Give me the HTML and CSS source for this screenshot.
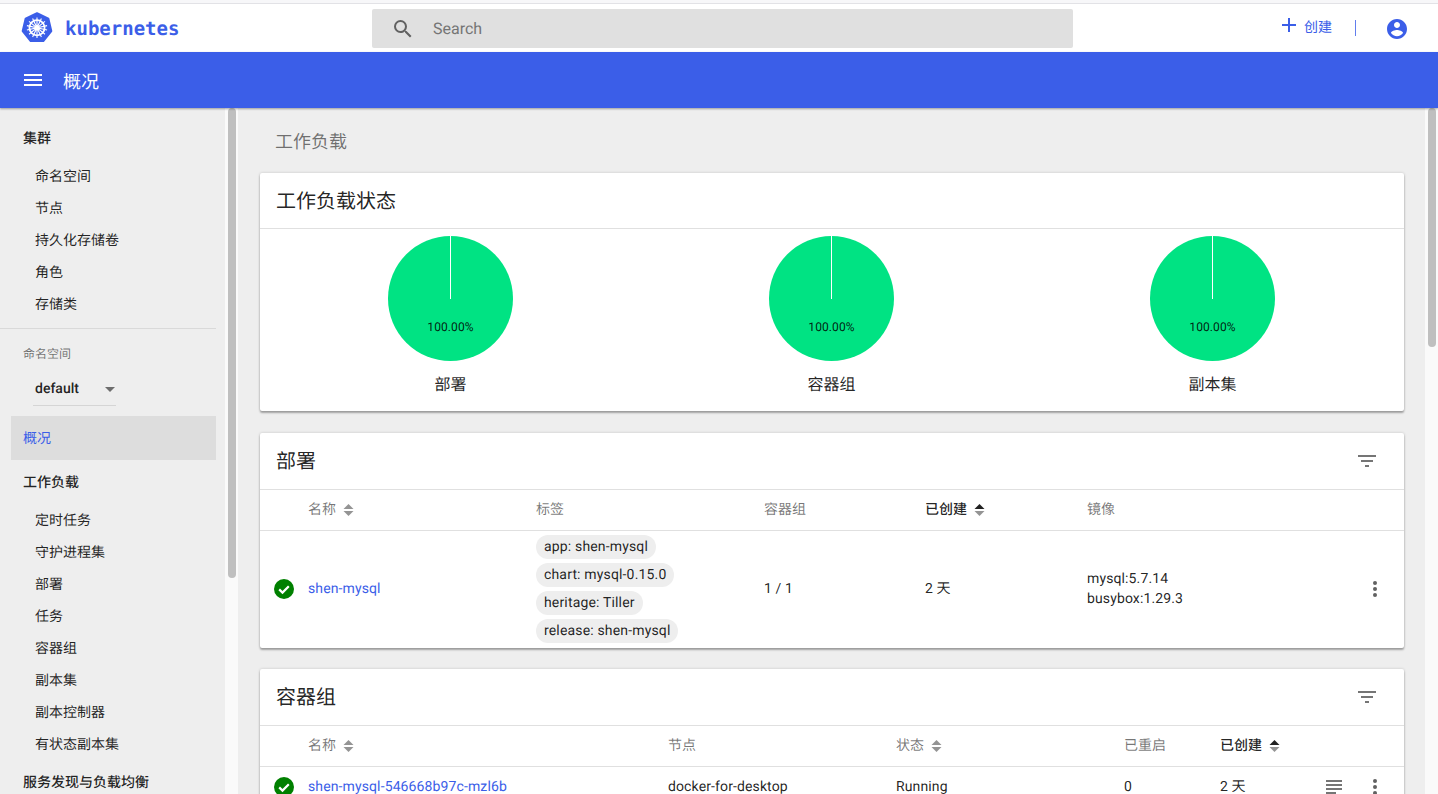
FILE: index.html
```html
<!DOCTYPE html>
<html lang="zh">
<head>
<meta charset="utf-8">
<title>概况 - Kubernetes Dashboard</title>
<link rel="stylesheet" href="styles.css">
</head>
<body>
<div class="app">
  <div class="strip"></div>
  <header class="topbar">
    <div class="brand">
      <svg class="logo" viewBox="0 0 32 32" width="32" height="32">
        <path class="logo-hept" d="M16 1.2 L27.4 6.7 L30.3 19.1 L22.3 29 L9.7 29 L1.7 19.1 L4.6 6.7 Z"/>
        <g class="logo-wheel">
          <circle cx="16" cy="15.8" r="7.6"/>
          <path d="M16 5.6V26M8 9.4 24 22.2M24 9.4 8 22.2M5.9 18 26.1 13.6M26.1 18 5.9 13.6M11.6 25 20.4 6.6M20.4 25 11.6 6.6"/>
        </g>
        <circle class="logo-hub" cx="16" cy="15.8" r="2.3"/>
      </svg>
      <span class="brand-name">kubernetes</span>
    </div>
    <div class="search">
      <svg class="search-icon" viewBox="0 0 24 24" width="24" height="24"><path d="M15.5 14h-.79l-.28-.27A6.47 6.47 0 0 0 16 9.5 6.5 6.5 0 1 0 9.5 16c1.61 0 3.09-.59 4.23-1.57l.27.28v.79l5 4.99L20.49 19l-4.99-5zm-6 0C7.01 14 5 11.99 5 9.5S7.01 5 9.5 5 14 7.01 14 9.5 11.99 14 9.5 14z"/></svg>
      <span class="search-text">Search</span>
    </div>
    <div class="actions">
      <svg class="plus" viewBox="0 0 14 14" width="14" height="14"><path d="M6 0h2v6h6v2H8v6H6V8H0V6h6z"/></svg>
      <span class="create">创建</span>
      <span class="divider"></span>
      <svg class="avatar" viewBox="0 0 24 24" width="24" height="24"><path d="M12 2C6.48 2 2 6.48 2 12s4.48 10 10 10 10-4.48 10-10S17.52 2 12 2zm0 3c1.66 0 3 1.34 3 3s-1.34 3-3 3-3-1.34-3-3 1.34-3 3-3zm0 14.2c-2.5 0-4.71-1.28-6-3.22.03-1.99 4-3.08 6-3.08 1.99 0 5.97 1.09 6 3.08-1.29 1.94-3.5 3.22-6 3.22z"/></svg>
    </div>
  </header>
  <div class="titlebar">
    <svg class="menu" viewBox="0 0 18 12" width="18" height="12"><path d="M0 0h18v2H0zM0 5h18v2H0zM0 10h18v2H0z"/></svg>
    <span class="page-title">概况</span>
  </div>
  <div class="body">
    <nav class="sidebar">
      <div class="nav-head">集群</div>
      <div class="nav-item">命名空间</div>
      <div class="nav-item">节点</div>
      <div class="nav-item">持久化存储卷</div>
      <div class="nav-item">角色</div>
      <div class="nav-item">存储类</div>
      <div class="nav-rule"></div>
      <div class="ns-label">命名空间</div>
      <div class="ns-select"><span>default</span><i class="ns-arrow"></i></div>
      <div class="nav-head nav-active">概况</div>
      <div class="nav-head">工作负载</div>
      <div class="nav-item">定时任务</div>
      <div class="nav-item">守护进程集</div>
      <div class="nav-item">部署</div>
      <div class="nav-item">任务</div>
      <div class="nav-item">容器组</div>
      <div class="nav-item">副本集</div>
      <div class="nav-item">副本控制器</div>
      <div class="nav-item">有状态副本集</div>
      <div class="nav-head">服务发现与负载均衡</div>
    </nav>
    <div class="gutter gutter-side"><div class="thumb thumb-side"></div></div>
    <main class="main">
      <div class="crumb">工作负载</div>

      <section class="card card-status">
        <h2 class="card-head">工作负载状态</h2>
        <div class="pies">
          <figure class="pie">
            <svg viewBox="0 0 125 125" width="125" height="125"><circle class="pie-fill" cx="62.5" cy="62.5" r="62.5"/><path class="pie-line" d="M62.5 0V63"/><text class="pie-text" x="62.5" y="95">100.00%</text></svg>
            <figcaption>部署</figcaption>
          </figure>
          <figure class="pie">
            <svg viewBox="0 0 125 125" width="125" height="125"><circle class="pie-fill" cx="62.5" cy="62.5" r="62.5"/><path class="pie-line" d="M62.5 0V63"/><text class="pie-text" x="62.5" y="95">100.00%</text></svg>
            <figcaption>容器组</figcaption>
          </figure>
          <figure class="pie">
            <svg viewBox="0 0 125 125" width="125" height="125"><circle class="pie-fill" cx="62.5" cy="62.5" r="62.5"/><path class="pie-line" d="M62.5 0V63"/><text class="pie-text" x="62.5" y="95">100.00%</text></svg>
            <figcaption>副本集</figcaption>
          </figure>
        </div>
      </section>

      <section class="card">
        <div class="card-head card-head-tool">
          <h2 class="card-title">部署</h2>
          <svg class="filter" viewBox="0 0 18 12" width="18" height="12"><path d="M0 0h18v2H0zM3 5h12v2H3zM7 10h4v2H7z"/></svg>
        </div>
        <div class="row row-head grid-deploy">
          <span></span>
          <span class="th">名称<svg class="sort" viewBox="0 0 11 14" width="11" height="14"><path d="M5.5 1 10.5 6H.5z"/><path d="M5.5 13 .5 8h10z"/></svg></span>
          <span class="th">标签</span>
          <span class="th">容器组</span>
          <span class="th th-on">已创建<svg class="sort" viewBox="0 0 11 14" width="11" height="14"><path class="sort-on" d="M5.5 1 10.5 6H.5z"/><path d="M5.5 13 .5 8h10z"/></svg></span>
          <span class="th">镜像</span>
          <span></span>
        </div>
        <div class="row row-deploy grid-deploy">
          <svg class="ok" viewBox="0 0 20 20" width="20" height="20"><circle cx="10" cy="10" r="10"/><path d="M5.2 10.4 8.5 13.6 14.8 7.2"/></svg>
          <a class="link">shen-mysql</a>
          <div class="chips">
            <span class="chip">app: shen-mysql</span>
            <span class="chip">chart: mysql-0.15.0</span>
            <span class="chip">heritage: Tiller</span>
            <span class="chip">release: shen-mysql</span>
          </div>
          <span class="td">1 / 1</span>
          <span class="td">2 天</span>
          <div class="td images"><span>mysql:5.7.14</span><span>busybox:1.29.3</span></div>
          <svg class="kebab" viewBox="0 0 4 16" width="4" height="16"><circle cx="2" cy="2" r="2"/><circle cx="2" cy="8" r="2"/><circle cx="2" cy="14" r="2"/></svg>
        </div>
      </section>

      <section class="card card-last">
        <div class="card-head card-head-tool">
          <h2 class="card-title">容器组</h2>
          <svg class="filter" viewBox="0 0 18 12" width="18" height="12"><path d="M0 0h18v2H0zM3 5h12v2H3zM7 10h4v2H7z"/></svg>
        </div>
        <div class="row row-head grid-pods">
          <span></span>
          <span class="th">名称<svg class="sort" viewBox="0 0 11 14" width="11" height="14"><path d="M5.5 1 10.5 6H.5z"/><path d="M5.5 13 .5 8h10z"/></svg></span>
          <span class="th">节点</span>
          <span class="th">状态<svg class="sort" viewBox="0 0 11 14" width="11" height="14"><path d="M5.5 1 10.5 6H.5z"/><path d="M5.5 13 .5 8h10z"/></svg></span>
          <span class="th">已重启</span>
          <span class="th th-on">已创建<svg class="sort" viewBox="0 0 11 14" width="11" height="14"><path class="sort-on" d="M5.5 1 10.5 6H.5z"/><path d="M5.5 13 .5 8h10z"/></svg></span>
          <span></span>
          <span></span>
        </div>
        <div class="row row-pod grid-pods">
          <svg class="ok" viewBox="0 0 20 20" width="20" height="20"><circle cx="10" cy="10" r="10"/><path d="M5.2 10.4 8.5 13.6 14.8 7.2"/></svg>
          <a class="link">shen-mysql-546668b97c-mzl6b</a>
          <span class="td">docker-for-desktop</span>
          <span class="td">Running</span>
          <span class="td">0</span>
          <span class="td">2 天</span>
          <svg class="logs" viewBox="0 0 16 14" width="16" height="14"><path d="M0 0h16v2H0zM0 4h16v2H0zM0 8h16v2H0zM0 12h10v2H0z"/></svg>
          <svg class="kebab" viewBox="0 0 4 16" width="4" height="16"><circle cx="2" cy="2" r="2"/><circle cx="2" cy="8" r="2"/><circle cx="2" cy="14" r="2"/></svg>
        </div>
      </section>
    </main>
    <div class="gutter gutter-main"><div class="thumb thumb-main"></div></div>
  </div>
</div>
</body>
</html>
```
FILE: styles.css
```css
* { box-sizing: border-box; }
html, body { margin: 0; height: 100%; overflow: hidden; }
body {
  font-family: Roboto, "Noto Sans CJK SC", sans-serif;
  font-size: 14px;
  line-height: 20px;
  text-rendering: geometricPrecision;
  color: rgba(0, 0, 0, .87);
  background: #eee;
}
.app { display: flex; flex-direction: column; height: 794px; overflow: hidden; }

.strip { height: 4px; background: #f7f7f9; border-bottom: 1px solid #e2e2e6; flex: none; }

.topbar { height: 48px; flex: none; background: #fff; display: flex; align-items: center; position: relative; }
.brand { width: 372px; display: flex; align-items: center; padding-left: 21px; flex: none; }
.logo { flex: none; }
.logo-hept { fill: #3b5ee8; stroke: #3b5ee8; stroke-width: 2; stroke-linejoin: round; }
.logo-wheel { fill: none; stroke: #fff; }
.logo-wheel circle { stroke-width: 1.8; }
.logo-wheel path { stroke-width: 1.1; }
.logo-hub { fill: #fff; }
.brand-name {
  margin: 2px 0 0 12px;
  font-family: "DejaVu Sans Mono", monospace;
  font-weight: 700;
  font-size: 19px;
  color: #3b5ee8;
}
.search {
  width: 701px; height: 39px; margin-top: 1px;
  background: #e0e0e0; border-radius: 2px;
  display: flex; align-items: center; padding-left: 19px; flex: none;
}
.search-icon { fill: #616161; flex: none; }
.search-text { margin-left: 18px; font-size: 16px; color: #757575; }
.actions { flex: 1; display: flex; align-items: center; padding-left: 209px; }
.plus { fill: #3b5ee8; flex: none; margin-top: -6px; }
.create { margin-left: 8px; color: #3b5ee8; font-size: 14px; }
.divider { width: 1px; height: 16px; background: #3b5ee8; margin-left: 23px; opacity: .8; }
.avatar { fill: #3b5ee8; margin-left: 29px; flex: none; margin-top: 2px; }

.titlebar {
  height: 56px; flex: none; background: #3b5ee8;
  display: flex; align-items: center; padding-left: 24px; color: #fff;
  box-shadow: 0 1px 2px rgba(0, 0, 0, .35);
  position: relative; z-index: 2;
}
.menu { fill: #fff; }
.page-title { margin-left: 21px; font-size: 18px; margin-top: 6px; }

.body { flex: 1; min-height: 0; display: flex; }

.sidebar { width: 225px; flex: none; padding-top: 8px; overflow: hidden; }
.nav-head { height: 44px; line-height: 46px; padding-left: 23px; font-weight: 500; width: 216px; white-space: nowrap; }
.nav-item { height: 32px; line-height: 34px; padding-left: 35px; }
.nav-rule { height: 1px; background: #d9d9d9; width: 216px; margin-top: 8px; }
.ns-label { padding: 17px 0 0 23px; height: 40px; line-height: 17px; font-size: 12px; color: rgba(0, 0, 0, .54); }
.ns-select {
  margin: 0 0 10px 33px; width: 83px; height: 37px; padding: 12px 0 0 2px;
  display: flex; border-bottom: 1px solid #d5d5d5; font-weight: 500; line-height: 17px;
}
.ns-arrow {
  width: 0; height: 0; margin: 6px 0 0 26px;
  border-left: 5px solid transparent; border-right: 5px solid transparent; border-top: 5px solid rgba(0, 0, 0, .54);
}
.nav-active { background: #ddd; color: #3b5ee8; margin-left: 11px; width: 205px; padding-left: 12px; font-weight: 400; }

.gutter { width: 13px; flex: none; background: #fafafa; padding-left: 3px; }
.gutter-main { width: 13px; }
.thumb { width: 8px; background: #bfbfbf; border-radius: 4px; }
.thumb-side { height: 470px; }
.thumb-main { height: 239px; }

.main { flex: 1; min-width: 0; padding: 0 21px 0 22px; overflow: hidden; }
.crumb { padding: 21px 0 0 15px; height: 65px; line-height: 28px; font-size: 18px; color: rgba(0, 0, 0, .54); }

.card {
  background: #fff; margin-bottom: 21px; border-radius: 2px;
  box-shadow: 0 2px 2px rgba(0, 0, 0, .3), 0 0 3px rgba(0, 0, 0, .18);
}
.card-status { margin-bottom: 22px; }
.card-head {
  margin: 0; height: 56px; line-height: 56px; padding: 0 16px;
  font-size: 20px; font-weight: 400; border-bottom: 1px solid #e0e0e0;
}
.card-head-tool { height: 57px; display: flex; align-items: center; justify-content: space-between; padding-right: 28px; }
.card-title { margin: 0; font-size: 20px; font-weight: 400; }
.filter { fill: #757575; flex: none; }

.pies { display: grid; grid-template-columns: repeat(3, 381px); height: 182px; padding-top: 7px; }
.pie { margin: 0; display: flex; flex-direction: column; align-items: center; }
.pie svg { display: block; }
.pie-fill { fill: #00e383; }
.pie-line { stroke: #fff; stroke-width: 1; fill: none; }
.pie-text { font-size: 12px; letter-spacing: .1px; text-anchor: middle; fill: rgba(0, 0, 0, .87); }
.pie figcaption { margin-top: 13px; font-size: 16px; line-height: 22px; }

.row { display: grid; align-items: center; }
.row-head { height: 41px; border-bottom: 1px solid #e0e0e0; }
.grid-deploy { grid-template-columns: 48px 228px 228px 161px 162px 259px 58px; }
.grid-pods { grid-template-columns: 48px 360px 228px 228px 96px 100px 26px 58px; }
.row-deploy { height: 117px; padding-bottom: 2px; }
.row-pod { height: 40px; }

.th { display: flex; align-items: center; gap: 7px; color: rgba(0, 0, 0, .54); }
.th-on { color: rgba(0, 0, 0, .87); font-weight: 500; }
.sort { fill: rgba(0, 0, 0, .42); flex: none; }
.sort-on { fill: rgba(0, 0, 0, .87); }

.ok { margin-left: 14px; display: block; }
.ok circle { fill: #008000; }
.ok path { fill: none; stroke: #fff; stroke-width: 2.2; }
.link { color: #3b5ee8; letter-spacing: .12px; }
.td { color: rgba(0, 0, 0, .87); letter-spacing: .12px; }
.images { display: flex; flex-direction: column; }
.chips { display: flex; flex-direction: column; align-items: flex-start; gap: 4px; align-self: start; margin-top: 4px; }
.chip { height: 24px; line-height: 24px; padding: 0 8px; border-radius: 12px; background: #eee; white-space: nowrap; letter-spacing: .16px; }
.kebab { fill: #616161; justify-self: center; }
.logs { fill: #757575; margin-left: 6px; }
```
